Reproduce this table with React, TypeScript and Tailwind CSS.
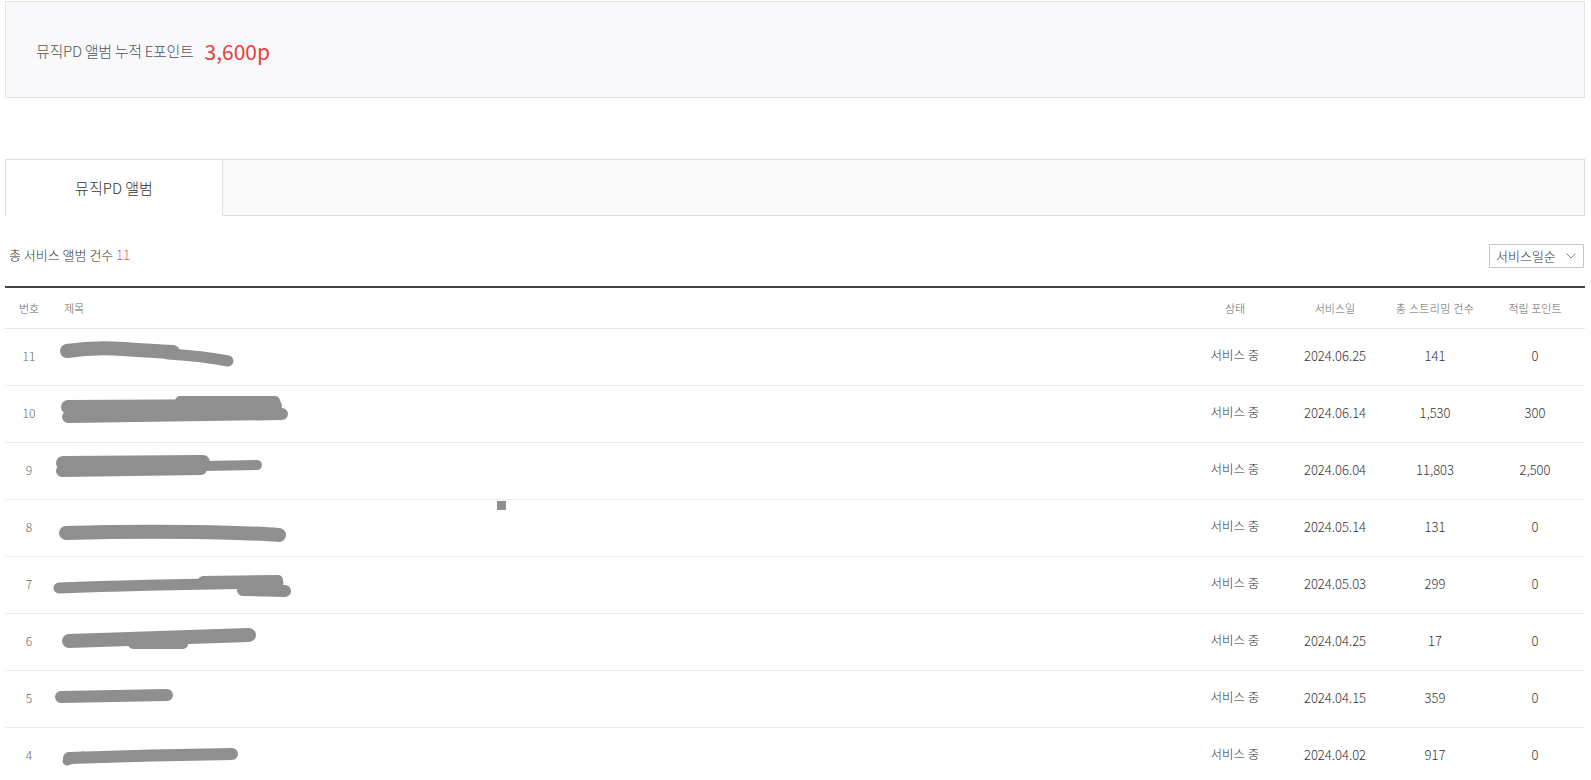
import React from "react";

type Row = {
  no: number;
  date: string;
  streams: string;
  points: string;
  strokes: { d: string; w: number }[];
};

// stroke coordinates relative to the title cell (x from 53, y from row top)
const rows: Row[] = [
  {
    no: 11,
    date: "2024.06.25",
    streams: "141",
    points: "0",
    strokes: [
      { d: "M14 22 Q40 18 70 20 T120 23", w: 14 },
      { d: "M115 25 Q150 27 175 32", w: 11 },
    ],
  },
  {
    no: 10,
    date: "2024.06.14",
    streams: "1,530",
    points: "300",
    strokes: [
      { d: "M15 21 L222 20", w: 14 },
      { d: "M15 31 Q120 30 229 28", w: 12 },
      { d: "M127 15 L222 15", w: 10 },
    ],
  },
  {
    no: 9,
    date: "2024.06.04",
    streams: "11,803",
    points: "2,500",
    strokes: [
      { d: "M10 20 L150 19", w: 14 },
      { d: "M9 28 Q80 27 148 26", w: 12 },
      { d: "M150 23 L204 22", w: 10 },
    ],
  },
  {
    no: 8,
    date: "2024.05.14",
    streams: "131",
    points: "0",
    strokes: [{ d: "M13 33 Q80 31 140 32 T226 35", w: 14 }],
  },
  {
    no: 7,
    date: "2024.05.03",
    streams: "299",
    points: "0",
    strokes: [
      { d: "M6 31 Q90 28 225 26", w: 11 },
      { d: "M150 24 L225 23", w: 10 },
      { d: "M190 33 L232 34", w: 12 },
    ],
  },
  {
    no: 6,
    date: "2024.04.25",
    streams: "17",
    points: "0",
    strokes: [
      { d: "M16 27 Q100 24 196 21", w: 14 },
      { d: "M80 30 L130 30", w: 10 },
    ],
  },
  {
    no: 5,
    date: "2024.04.15",
    streams: "359",
    points: "0",
    strokes: [{ d: "M8 26 L114 24", w: 12 }],
  },
  {
    no: 4,
    date: "2024.04.02",
    streams: "917",
    points: "0",
    strokes: [
      { d: "M16 30 Q100 27 179 26", w: 12 },
      { d: "M14 33 L30 28", w: 9 },
    ],
  },
];

const font = {
  fontFamily: '"Noto Sans CJK KR", "Noto Sans", sans-serif',
};

export default function App() {
  return (
    <div className="min-h-[780px] bg-white pl-[5px] pr-[6px] pt-px font-light" style={font}>
      {/* summary box */}
      <div className="flex h-[97px] items-center border border-[#e4e4e6] bg-[#f9f9fb] pl-[30px] pt-[4px]">
        <span className="text-[15px] tracking-[-0.3px] text-[#555]">뮤직PD 앨범 누적 E포인트</span>
        <span className="ml-[11px] text-[21px] font-normal text-[#e8403a]">3,600p</span>
      </div>

      {/* tabs */}
      <div className="mt-[61px] flex h-[57px]">
        <div className="flex w-[218px] items-center justify-center border-l border-r border-t border-[#dcdcdc] bg-white text-[15px] text-[#333]">
          뮤직PD 앨범
        </div>
        <div className="flex-1 border-b border-r border-t border-[#dcdcdc] bg-[#fafafa]" />
      </div>

      {/* count + select */}
      <div className="mt-[28px] flex items-center justify-between">
        <div className="pb-[2px] pl-[4px] text-[13px] text-[#333]">
          총 서비스 앨범 건수 <span className="text-[#e45b5b]">11</span>
        </div>
        <div className="mr-px flex h-[24px] w-[95px] items-center justify-between border border-[#c8c8c8] bg-white pl-[6px] pr-[7px] text-[13px] text-[#333]">
          <span>서비스일순</span>
          <svg width="10" height="6" viewBox="0 0 10 6" fill="none">
            <polyline points="0.5,0.5 5,5 9.5,0.5" stroke="#888" strokeWidth="1" />
          </svg>
        </div>
      </div>

      {/* table */}
      <div className="mt-[18px] border-t-2 border-[#444]">
        <div className="grid h-[41px] grid-cols-[48px_1fr_100px_100px_100px_100px] items-center border-b border-[#e6e6e6] text-[11px] text-[#666]">
          <div className="text-center">번호</div>
          <div className="pl-[11px]">제목</div>
          <div className="text-center">상태</div>
          <div className="text-center">서비스일</div>
          <div className="text-center tracking-[0.3px]">총 스트리밍 건수</div>
          <div className="text-center">적립 포인트</div>
        </div>
        {rows.map((r) => (
          <div
            key={r.no}
            className="relative grid h-[57px] grid-cols-[48px_1fr_100px_100px_100px_100px] items-center border-b border-[#ebebeb] text-[13px] text-[#333]"
          >
            <div className="pb-[3px] text-center text-[12px] text-[#666]">{r.no}</div>
            <div className="relative h-full">
              <svg
                className="absolute left-0 top-0"
                width="260"
                height="57"
                viewBox="0 0 260 57"
                fill="none"
              >
                {r.strokes.map((s, i) => (
                  <path
                    key={i}
                    d={s.d}
                    stroke="#8f8f8f"
                    strokeWidth={s.w}
                    strokeLinecap="round"
                    strokeLinejoin="round"
                  />
                ))}
              </svg>
            </div>
            <div className="pb-[3px] text-center text-[12.5px]">서비스 중</div>
            <div className="pb-[3px] text-center">{r.date}</div>
            <div className="pb-[3px] text-center">{r.streams}</div>
            <div className="pb-[3px] text-center">{r.points}</div>
            {r.no === 8 && (
              <div className="absolute left-[492px] top-[1px] h-[9px] w-[9px] bg-[#8f8f8f]" />
            )}
          </div>
        ))}
      </div>
    </div>
  );
}
